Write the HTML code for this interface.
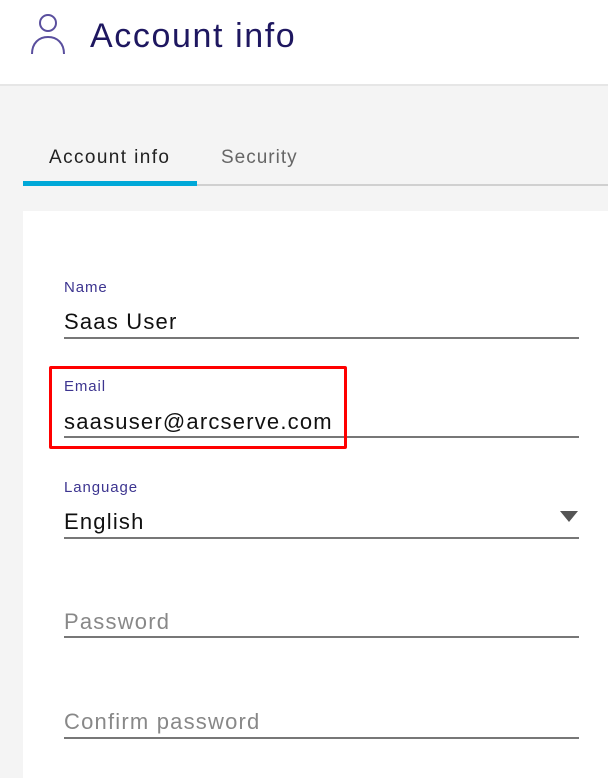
<!DOCTYPE html>
<html><head><style>
body{margin:0;width:608px;height:778px;overflow:hidden;background:#f4f4f4;font-family:"Liberation Sans",sans-serif;position:relative}
.hdr{position:absolute;left:0;top:0;width:608px;height:84px;background:#fff;border-bottom:2px solid #e6e6e6}
.t{position:absolute;white-space:nowrap}
.line{position:absolute;left:64px;width:515px;height:2px;background:#777}
.lbl{position:absolute;left:64px;font-size:15px;color:#3d3590;letter-spacing:0.9px}
.val{position:absolute;left:64px;font-size:22px;color:#111;letter-spacing:1.2px}
.ph{position:absolute;left:64px;font-size:22px;color:#888;letter-spacing:1.2px}
</style></head><body>
<div class="hdr">
<svg style="position:absolute;left:30px;top:13px" width="38" height="42" viewBox="0 0 38 42"><circle cx="18" cy="10" r="8" fill="none" stroke="#5a4f9e" stroke-width="2"/><path d="M2 41 C2 30 9 24 18 24 C27 24 34 30 34 41" fill="none" stroke="#5a4f9e" stroke-width="2"/></svg>
<div class="t" style="left:90px;top:17px;font-size:34px;color:#1e1760;letter-spacing:1.6px">Account info</div>
</div>
<div class="t" style="left:49px;top:147px;font-size:19px;color:#222;letter-spacing:1.4px">Account info</div>
<div class="t" style="left:221px;top:147px;font-size:19px;color:#666;letter-spacing:1px">Security</div>
<div style="position:absolute;left:23px;top:184px;width:585px;height:2px;background:#d0d0d0"></div>
<div style="position:absolute;left:23px;top:181px;width:174px;height:5px;background:#00a8d8"></div>
<div style="position:absolute;left:23px;top:211px;width:585px;height:567px;background:#fff"></div>
<div class="lbl" style="top:279px">Name</div>
<div class="val" style="top:309px">Saas User</div>
<div class="line" style="top:337px"></div>
<div class="lbl" style="top:378px">Email</div>
<div class="val" style="top:409px">saasuser@arcserve.com</div>
<div class="line" style="top:436px"></div>
<div style="position:absolute;left:49px;top:366px;width:292px;height:77px;border:3px solid #f00;border-radius:2px"></div>
<div class="lbl" style="top:479px">Language</div>
<div class="val" style="top:509px">English</div>
<svg style="position:absolute;left:560px;top:511px" width="18" height="12"><path d="M0 0H18L9 11Z" fill="#555"/></svg>
<div class="line" style="top:537px"></div>
<div class="ph" style="top:609px">Password</div>
<div class="line" style="top:636px"></div>
<div class="ph" style="top:709px">Confirm password</div>
<div class="line" style="top:737px"></div>
</body></html>
